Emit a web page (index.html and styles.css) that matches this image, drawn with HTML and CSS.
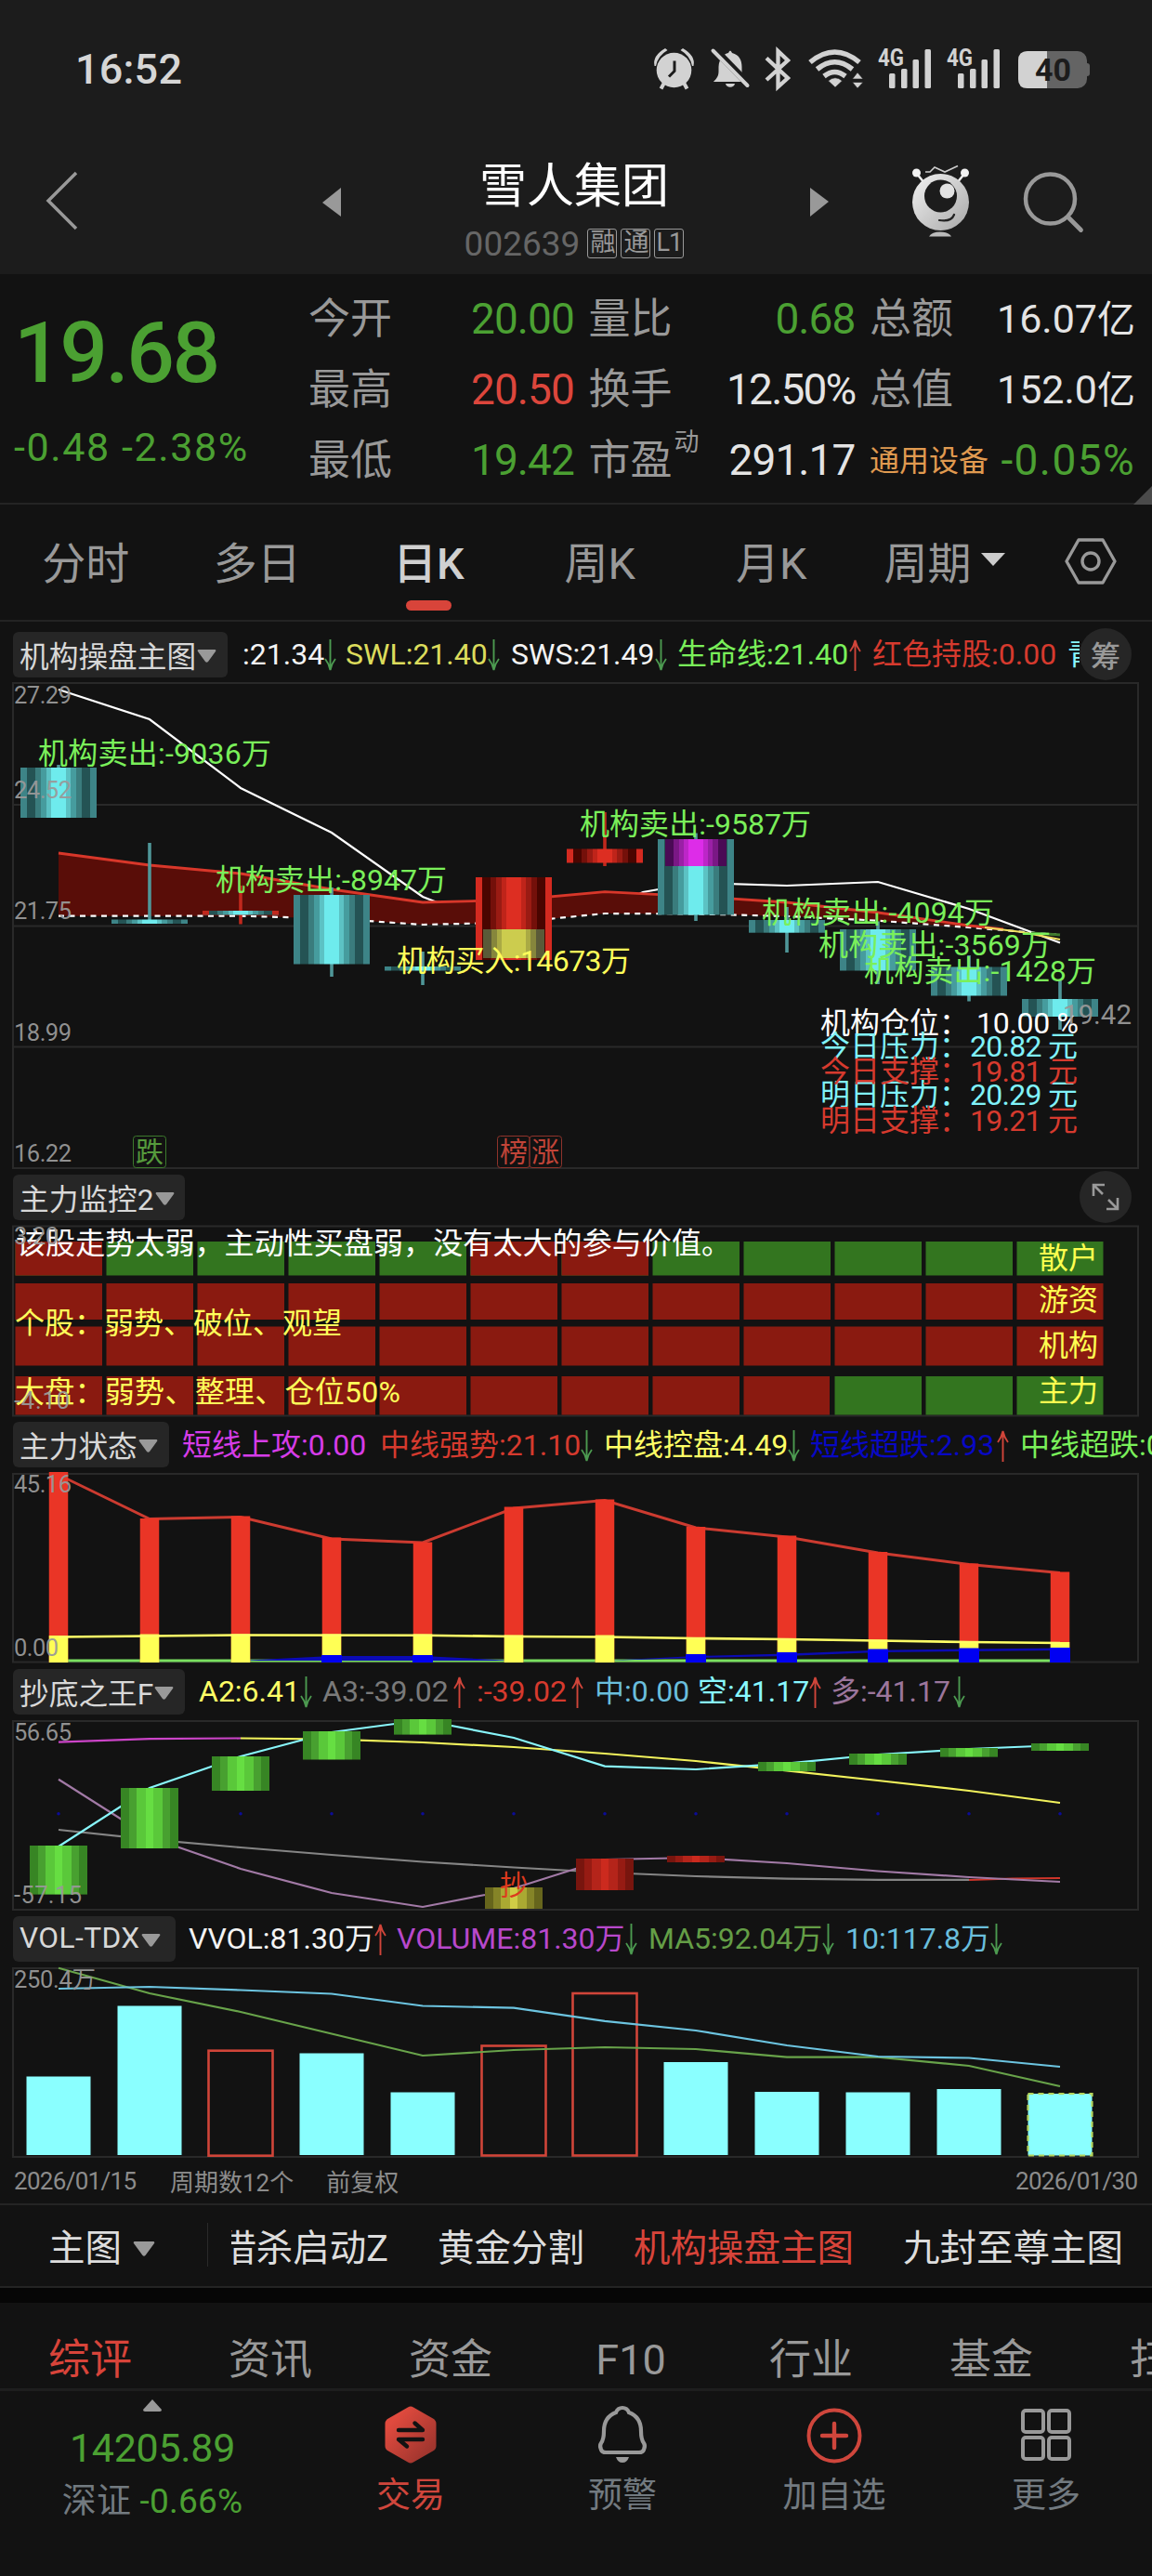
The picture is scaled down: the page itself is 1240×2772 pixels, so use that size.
FILE: index.html
```html
<!DOCTYPE html>
<html lang="zh-CN">
<head>
<meta charset="utf-8">
<title>雪人集团 002639</title>
<link rel="stylesheet" href="styles.css">
</head>
<body>
<svg class="defs" width="0" height="0" aria-hidden="true">
  <defs>
    <linearGradient id="cyan">
      <stop offset=".09" stop-color="#3d8487"/><stop offset=".09" stop-color="#245354"/><stop offset=".2" stop-color="#245354"/><stop offset=".2" stop-color="#3a7c7d"/><stop offset=".27" stop-color="#3a7c7d"/><stop offset=".27" stop-color="#469c9e"/><stop offset=".34" stop-color="#469c9e"/><stop offset=".34" stop-color="#5cc2c4"/><stop offset=".4" stop-color="#5cc2c4"/><stop offset=".4" stop-color="#6eebed"/><stop offset=".6" stop-color="#6eebed"/><stop offset=".6" stop-color="#5cc2c4"/><stop offset=".66" stop-color="#5cc2c4"/><stop offset=".66" stop-color="#469c9e"/><stop offset=".73" stop-color="#469c9e"/><stop offset=".73" stop-color="#3a7c7d"/><stop offset=".8" stop-color="#3a7c7d"/><stop offset=".8" stop-color="#245354"/><stop offset=".91" stop-color="#245354"/><stop offset=".91" stop-color="#3d8487"/>
    </linearGradient>
    <linearGradient id="red">
      <stop offset=".09" stop-color="#d42a20"/><stop offset=".09" stop-color="#4a0500"/><stop offset=".2" stop-color="#4a0500"/><stop offset=".2" stop-color="#74100a"/><stop offset=".27" stop-color="#74100a"/><stop offset=".27" stop-color="#9a1b13"/><stop offset=".34" stop-color="#9a1b13"/><stop offset=".34" stop-color="#bf241a"/><stop offset=".4" stop-color="#bf241a"/><stop offset=".4" stop-color="#dd2e22"/><stop offset=".6" stop-color="#dd2e22"/><stop offset=".6" stop-color="#bf241a"/><stop offset=".66" stop-color="#bf241a"/><stop offset=".66" stop-color="#9a1b13"/><stop offset=".73" stop-color="#9a1b13"/><stop offset=".73" stop-color="#74100a"/><stop offset=".8" stop-color="#74100a"/><stop offset=".8" stop-color="#4a0500"/><stop offset=".91" stop-color="#4a0500"/><stop offset=".91" stop-color="#d42a20"/>
    </linearGradient>
    <linearGradient id="gold">
      <stop offset=".13" stop-color="#5a5a38"/><stop offset=".13" stop-color="#86863c"/><stop offset=".22" stop-color="#86863c"/><stop offset=".22" stop-color="#aaaa44"/><stop offset=".31" stop-color="#aaaa44"/><stop offset=".31" stop-color="#cccc4e"/><stop offset=".69" stop-color="#cccc4e"/><stop offset=".69" stop-color="#aaaa44"/><stop offset=".78" stop-color="#aaaa44"/><stop offset=".78" stop-color="#86863c"/><stop offset=".87" stop-color="#86863c"/><stop offset=".87" stop-color="#5a5a38"/>
    </linearGradient>
    <linearGradient id="violet">
      <stop offset=".13" stop-color="#4a0a55"/><stop offset=".13" stop-color="#7a1885"/><stop offset=".22" stop-color="#7a1885"/><stop offset=".22" stop-color="#9a20a6"/><stop offset=".3" stop-color="#9a20a6"/><stop offset=".3" stop-color="#bd26c8"/><stop offset=".38" stop-color="#bd26c8"/><stop offset=".38" stop-color="#dd2ce8"/><stop offset=".62" stop-color="#dd2ce8"/><stop offset=".62" stop-color="#bd26c8"/><stop offset=".7" stop-color="#bd26c8"/><stop offset=".7" stop-color="#9a20a6"/><stop offset=".78" stop-color="#9a20a6"/><stop offset=".78" stop-color="#7a1885"/><stop offset=".87" stop-color="#7a1885"/><stop offset=".87" stop-color="#4a0a55"/>
    </linearGradient>
    <linearGradient id="lime">
      <stop offset=".14" stop-color="#378524"/><stop offset=".14" stop-color="#48a030"/><stop offset=".28" stop-color="#48a030"/><stop offset=".28" stop-color="#5ac83a"/><stop offset=".43" stop-color="#5ac83a"/><stop offset=".43" stop-color="#66de42"/><stop offset=".57" stop-color="#66de42"/><stop offset=".57" stop-color="#5ac83a"/><stop offset=".72" stop-color="#5ac83a"/><stop offset=".72" stop-color="#48a030"/><stop offset=".86" stop-color="#48a030"/><stop offset=".86" stop-color="#378524"/>
    </linearGradient>
    <linearGradient id="brick">
      <stop offset=".14" stop-color="#78150e"/><stop offset=".14" stop-color="#961b13"/><stop offset=".28" stop-color="#961b13"/><stop offset=".28" stop-color="#b4241a"/><stop offset=".43" stop-color="#b4241a"/><stop offset=".43" stop-color="#cc2a1e"/><stop offset=".57" stop-color="#cc2a1e"/><stop offset=".57" stop-color="#b4241a"/><stop offset=".72" stop-color="#b4241a"/><stop offset=".72" stop-color="#961b13"/><stop offset=".86" stop-color="#961b13"/><stop offset=".86" stop-color="#78150e"/>
    </linearGradient>
    <linearGradient id="olive">
      <stop offset=".14" stop-color="#66651c"/><stop offset=".14" stop-color="#858427"/><stop offset=".28" stop-color="#858427"/><stop offset=".28" stop-color="#aaa932"/><stop offset=".43" stop-color="#aaa932"/><stop offset=".43" stop-color="#cfcd46"/><stop offset=".57" stop-color="#cfcd46"/><stop offset=".57" stop-color="#aaa932"/><stop offset=".72" stop-color="#aaa932"/><stop offset=".72" stop-color="#858427"/><stop offset=".86" stop-color="#858427"/><stop offset=".86" stop-color="#66651c"/>
    </linearGradient>
    <linearGradient id="silver" x1="0" y1="0" x2="1" y2="1"><stop offset="0" stop-color="#f2f2f2"/><stop offset="1" stop-color="#a8a8a8"/></linearGradient>
    <linearGradient id="hexred" x1="0" y1="0" x2="1" y2="1"><stop offset=".2" stop-color="#e04a3e"/><stop offset="1" stop-color="#8f302a"/></linearGradient>
    <symbol id="down" viewBox="0 0 13 34"><path d="M6.500 0V32M1 21Q5 26 6.500 33Q8 26 12 21" fill="none" stroke="#4c9a50" stroke-width="1.900"/></symbol>
    <symbol id="up" viewBox="0 0 13 34"><path d="M6.500 34V2M1 13Q5 8 6.500 1Q8 8 12 13" fill="none" stroke="#d0453a" stroke-width="1.900"/></symbol>
    <symbol id="caret" viewBox="0 0 21 14"><path d="M1.500 0H19.500Q21 .8 20 2L12 13Q10.500 14.500 9 13L1 2Q0 .8 1.500 0Z" fill="#999"/></symbol>
    <symbol id="signal" viewBox="0 0 58 46">
      <g fill="#d2d2d2"><rect x="12" y="29" width="6.500" height="16" rx="1.500"/><rect x="25" y="24" width="6.500" height="21" rx="1.500"/><rect x="37.500" y="14" width="6.500" height="31" rx="1.500"/><rect x="50.500" y="3" width="6.500" height="42" rx="1.500"/></g>
      <text x="0" y="20.500" font-size="25" font-weight="700" fill="#d2d2d2" textLength="28" lengthAdjust="spacingAndGlyphs">4G</text>
    </symbol>
  </defs>
</svg>

<header class="top">
  <div class="status">
    <span class="clock">16:52</span>
    <svg class="status-icons" width="480" height="50" viewBox="700 50 480 50">
      <g fill="#d2d2d2">
        <circle cx="724.500" cy="75.500" r="18.800"/>
        <path d="M703.500 71Q701 60 715 52L717.500 54Q707 60 705 71ZM745.500 71Q748 60 734 52L731.500 54Q742 60 744 71Z"/>
        <path d="M714 89L710.500 95.500M735 89L738.500 95.500" stroke="#d2d2d2" stroke-width="4"/>
        <path d="M725 65.500V76.500L719 82.500" fill="none" stroke="#1c1c1c" stroke-width="3"/>
        <path d="M767 88C770 85 772.500 82 772.500 77V72C773 63 778 58 783 57Q785 52 787 57C795 59 797.500 65 797.500 72V78C797.500 83 800 85 803 87V88Z"/>
        <path d="M779 99H791V90H779Z" fill="#1c1c1c"/>
        <path d="M780 90H790Q789 93.800 785 93.800Q781 93.800 780 90Z"/>
        <path d="M769 54L807 93" stroke="#1c1c1c" stroke-width="8"/>
        <path d="M766.500 54.500L803.500 92" stroke="#d2d2d2" stroke-width="4" stroke-linecap="round"/>
        <path d="M824 62.500L847 84L836.500 93.500V55L847 65L824 86" fill="none" stroke="#d2d2d2" stroke-width="4.300"/>
        <path d="M871 76Q897.500 54 924 76M878.500 83.500Q897.500 68 916.500 83.500M886 91Q897.500 82 909 91" transform="translate(0 -9)" fill="none" stroke="#d2d2d2" stroke-width="5.500"/>
        <path d="M898 94L890.500 87Q898 80.500 905.500 87ZM916.500 85L922 78L928 85ZM916.500 88.500L922 95L928 88.500Z" stroke="#1c1c1c" stroke-width=".6"/>
        <rect x="1095" y="55" width="74" height="40" rx="10" fill="#646464"/>
        <path d="M1169 68Q1172 68 1172 71V79Q1172 82 1169 82Z" fill="#646464"/>
        <path d="M1126 55V95H1105Q1095 95 1095 85V65Q1095 55 1105 55Z"/>
      </g>
      <use href="#signal" x="944" y="50" width="58" height="46"/>
      <use href="#signal" x="1018" y="50" width="58" height="46"/>
      <text x="1113" y="87" font-size="34" font-weight="700" fill="#1c1c1c" textLength="39">40</text>
    </svg>
  </div>
  <div class="titlebar">
    <svg class="back" width="36" height="66" viewBox="48 183 36 66"><path d="M82 186L52 216L82 246" fill="none" stroke="#999" stroke-width="3.500"/></svg>
    <svg width="22" height="34" viewBox="0 0 22 34"><path d="M21 1V32L1 17Z" fill="#999"/></svg>
    <div class="stock">
      <h1>雪人集团</h1>
      <div class="code"><span class="num">002639</span><i>融</i><i>通</i><i>L1</i></div>
    </div>
    <svg width="22" height="34" viewBox="0 0 22 34"><path d="M1 1V32L21 16Z" fill="#999"/></svg>
    <svg class="mascot" width="64" height="78" viewBox="982 178 64 78">
      <path d="M988 187L996 197M1039 187L1031 197" stroke="#eee" stroke-width="2.500"/>
      <circle cx="987.500" cy="186" r="4.500" fill="#f2f2f2"/><circle cx="1039.500" cy="186" r="4.500" fill="#f2f2f2"/>
      <path d="M997 185H1002L1007 180L1018 185L1032 178.500" fill="none" stroke="#ccc" stroke-width="1.600"/>
      <circle cx="1013.500" cy="217.500" r="30.500" fill="url(#silver)"/>
      <circle cx="1013.500" cy="211" r="17.500" fill="#1c1c1c"/><circle cx="1020.500" cy="205.500" r="8" fill="#e2e2e2"/>
      <path d="M1012 237Q1025 239 1028 231" fill="none" stroke="#222" stroke-width="2.200" stroke-linecap="round"/>
      <path d="M1001 254.500Q1004 249.500 1013 249.500Q1022 249.500 1025 254.500Z" fill="#bbb"/>
    </svg>
    <svg width="68" height="68" viewBox="1100 182 68 68"><circle cx="1131.500" cy="213" r="26.500" fill="none" stroke="#999" stroke-width="4.500"/><path d="M1151 233L1164.500 246.500" stroke="#999" stroke-width="4.800" stroke-linecap="round"/></svg>
  </div>
</header>

<section class="quote">
  <div class="last">
    <div class="price">19.68</div>
    <div class="change">-0.48 -2.38%</div>
  </div>
  <dl class="stats">
    <div><dt>今开</dt><dd class="g">20.00</dd></div>
    <div><dt>量比</dt><dd class="g">0.68</dd></div>
    <div><dt>总额</dt><dd class="amt">16.07<b>亿</b></dd></div>
    <div><dt>最高</dt><dd class="r">20.50</dd></div>
    <div><dt>换手</dt><dd class="tight">12.50%</dd></div>
    <div><dt>总值</dt><dd class="amt">152.0<b>亿</b></dd></div>
    <div><dt>最低</dt><dd class="g">19.42</dd></div>
    <div><dt>市盈<sup>动</sup></dt><dd>291.17</dd></div>
    <div><dt class="sector">通用设备</dt><dd class="g wide">-0.05%</dd></div>
  </dl>
  <span class="corner"></span>
</section>

<nav class="periods">
  <a>分时</a><a>多日</a><a class="on">日K</a><a>周K</a><a>月K</a><a class="more">周期<svg width="26" height="14" viewBox="0 0 26 14"><path d="M0 0H26L13 14Z" fill="#ccc"/></svg></a>
  <svg class="gear" width="56" height="52" viewBox="0 0 56 52"><path d="M15 3H41L54 26L41 49H15L2 26Z" fill="none" stroke="#999" stroke-width="3.400" stroke-linejoin="round"/><circle cx="28" cy="26" r="9" fill="none" stroke="#999" stroke-width="3.400"/></svg>
</nav>

<section class="panel main">
  <div class="head">
    <button class="chip">机构操盘主图<svg><use href="#caret"/></svg></button>
    <div class="reads">
      <span class="white">:21.34<svg><use href="#down"/></svg></span>
      <span class="dim-yellow">SWL:21.40<svg><use href="#down"/></svg></span>
      <span class="white">SWS:21.49<svg><use href="#down"/></svg></span>
      <span class="lime">生命线:21.40<svg><use href="#up"/></svg></span>
      <span class="red">红色持股:0.00</span>
      <span class="aqua">青色</span>
    </div>
    <button class="round">筹</button>
  </div>
  <svg class="plot" width="1240" height="524" viewBox="0 734 1240 524">
    <g class="frame"><rect x="14" y="735" width="1211" height="522"/><path d="M14 866H1225M14 996.500H1225M14 1126.500H1225"/></g>
    <polyline class="ln" stroke="#fff" points="63,742 161,774 259,848 357,896 455,965 553,1003 594,987.500 607,984 651,980 692,960 749,950 847,953 945,949 1043,978 1141,1014.500"/>
    <path fill="#590d08" d="M63 918L161 931L259 940L357 957L455 971L553 968.500L651 959.700L749 964.600L847 971L945 982L1043 996L1043 998L945 990.700L847 986L749 983.400L651 983L553 992.600L455 995L357 988.400L259 985.700L63 985.700Z"/>
    <polyline class="ln" stroke="#fff" stroke-dasharray="6 5.500" points="63,985.700 259,985.700 357,988.400 455,995 553,992.600 651,983 749,983.400 847,986 945,990.700 1043,998 1141,1006"/>
    <polyline fill="none" stroke="#d8372a" stroke-width="2.800" points="63,918 161,931 259,940 357,957 455,971 553,968.500 651,959.700 749,964.600 847,971 945,982 1043,996 1080,1000"/>
    <path d="M1110 1004L1141 1006" stroke="#3f7a2c" stroke-width="3"/>
    <path class="ln" d="M1060 998L1100 1003L1141 1011" stroke="#f0e060"/>
    <g stroke="#4f9698" stroke-width="3.600"><path d="M63 823V830M161 907V990M357 955V1051M455 1024V1060M749 896.500V991M847 976V1025M945 991.500V1059M1043 1028V1077.500M1141 1054.600V1108"/></g>
    <path d="M259 953V994.500M651 874V932" stroke="#c0281d" stroke-width="3.600"/>
    <g fill="url(#cyan)">
      <rect x="22" y="826" width="82" height="54"/><rect x="120" y="989.500" width="82" height="4.500"/><rect x="218" y="980" width="82" height="4.500"/><rect x="316" y="963" width="82" height="74.500"/><rect x="414" y="1040" width="82" height="4.500"/>
      <rect x="708" y="903" width="82" height="81.500"/><rect x="806" y="990" width="82" height="13.700"/><rect x="904" y="1000" width="82" height="44.500"/><rect x="1002" y="1040.500" width="82" height="31"/><rect x="1100" y="1075" width="82" height="19"/>
    </g>
    <path d="M218 980h7v4.500h-7zM293 980h7v4.500h-7z" fill="#c0281d"/>
    <g fill="url(#red)"><rect x="512" y="944" width="82" height="89"/><rect x="610" y="913.500" width="82" height="15"/></g>
    <rect x="520" y="1000" width="66" height="31" fill="url(#gold)"/>
    <rect x="716" y="903" width="66" height="29" fill="url(#violet)"/>
    <g class="note lime">
      <text x="41" y="821.500" textLength="251">机构卖出:-9036万</text>
      <text x="232" y="958" textLength="249">机构卖出:-8947万</text>
      <text x="624" y="898" textLength="249">机构卖出:-9587万</text>
      <text x="820" y="993" textLength="250">机构卖出:-4094万</text>
      <text x="881" y="1028" textLength="250">机构卖出:-3569万</text>
      <text x="930" y="1055.500" textLength="250">机构卖出:-1428万</text>
    </g>
    <text class="note yellow" x="427" y="1045" textLength="252">机构买入:14673万</text>
    <g class="note white"><text x="883" y="1111.500">机构仓位：</text><text x="1051" y="1111.500" textLength="110">10.00 %</text></g>
    <g class="note aqua"><text x="883" y="1136.500">今日压力：</text><text x="1044" y="1136.500" textLength="116">20.82 元</text><text x="883" y="1189">明日压力：</text><text x="1044" y="1189" textLength="116">20.29 元</text></g>
    <g class="note red"><text x="883" y="1164">今日支撑：</text><text x="1044" y="1164" textLength="116">19.81 元</text><text x="883" y="1217">明日支撑：</text><text x="1044" y="1217" textLength="116">19.21 元</text></g>
    <g class="axis"><text x="15" y="757" textLength="62">27.29</text><text x="15" y="859" textLength="62">24.52</text><text x="15" y="989" textLength="62">21.75</text><text x="15" y="1120" textLength="62">18.99</text><text x="15" y="1250" textLength="62">16.22</text><text class="big" x="1144" y="1102" textLength="74">19.42</text></g>
    <g class="tag"><rect x="143.500" y="1222.500" width="35" height="34" rx="3" stroke="#3c7a2c"/><text x="146" y="1250" fill="#559a3c">跌</text></g>
    <g class="tag" fill="#c04438"><rect x="535.500" y="1222.500" width="34.500" height="34" rx="3" stroke="#8f332b"/><rect x="570" y="1222.500" width="34.500" height="34" rx="3" stroke="#8f332b"/><text x="538" y="1250">榜</text><text x="572" y="1250">涨</text></g>
  </svg>
</section>

<section class="panel monitor">
  <div class="head">
    <button class="chip">主力监控2<svg><use href="#caret"/></svg></button>
    <button class="round"><svg class="expand" width="32" height="32" viewBox="0 0 32 32"><path d="M3 15V3H15M4 4L13 13M29 17V29H17M28 28L19 19" fill="none" stroke="#999" stroke-width="2.600"/></svg></button>
  </div>
  <svg class="plot" width="1240" height="207" viewBox="0 1318 1240 207">
    <g class="frame"><rect x="14" y="1319.500" width="1211" height="204"/></g>
    <g fill="none" stroke-dasharray="93.500 4.500">
      <path d="M16.500 1354.300H1187.500" stroke="#33751f" stroke-width="36.500"/>
      <path d="M16.500 1354.300H110M506.500 1354.300H698" stroke="#8a1a10" stroke-width="36.500"/>
      <path d="M16.500 1400.500H1187.500" stroke="#8a1a10" stroke-width="39"/>
      <path d="M16.500 1448.500H1187.500" stroke="#8a1a10" stroke-width="42"/>
      <path d="M16.500 1501.800H893" stroke="#8a1a10" stroke-width="41.500"/>
      <path d="M898.500 1501.800H1187.500" stroke="#33751f" stroke-width="41.500"/>
    </g>
    <text class="note white" x="17" y="1348.500" textLength="770">该股走势太弱，主动性买盘弱，没有太大的参与价值。</text>
    <g class="note yellow">
      <text x="16" y="1434.500" textLength="352">个股：弱势、破位、观望</text>
      <text x="16" y="1509" textLength="415">大盘：弱势、整理、仓位50%</text>
      <g fill="#ffff50"><text x="1118" y="1364.500">散户</text><text x="1118" y="1409.500">游资</text><text x="1118" y="1458.500">机构</text><text x="1118" y="1508">主力</text></g>
    </g>
    <g class="axis"><text x="15" y="1339" textLength="48">3.20</text><text x="15" y="1516" textLength="60">-4.10</text></g>
  </svg>
</section>

<section class="panel state">
  <div class="head">
    <button class="chip">主力状态<svg><use href="#caret"/></svg></button>
    <div class="reads">
      <span class="magenta">短线上攻:0.00</span>
      <span class="red">中线强势:21.10<svg><use href="#down"/></svg></span>
      <span class="yellow">中线控盘:4.49<svg><use href="#down"/></svg></span>
      <span class="blue">短线超跌:2.93<svg><use href="#up"/></svg></span>
      <span class="lime">中线超跌:0.00</span>
    </div>
  </div>
  <svg class="plot" width="1240" height="205" viewBox="0 1585 1240 205">
    <g class="frame"><rect x="14" y="1586" width="1211" height="202.500"/></g>
    <path d="M63 1787H1141" stroke="#7ae060" stroke-width="3"/>
    <path d="M259 1787L357 1782H455L553 1787ZM651 1787L749 1782L847 1779.500L945 1775.700L1043 1774.500L1141 1773.500V1776L945 1778L847 1782L749 1784Z" fill="#0b0bb4"/>
    <polyline fill="none" stroke="#cc3b30" stroke-width="3" points="63,1587 161,1634.500 259,1632.500 357,1656 455,1660 553,1623 651,1614.500 749,1644 847,1654 945,1671 1043,1683.500 1141,1692.500"/>
    <g stroke="#ea3526" stroke-width="20.500"><path d="M63 1584V1789M161 1634V1789M259 1631.500V1789M357 1654.500V1789M455 1659.500V1789M553 1621.500V1789M651 1613.500V1789M749 1643V1789M847 1652.500V1789M945 1670V1789M1043 1682.500V1789M1141 1691.500V1789"/></g>
    <g stroke="#ffff55" stroke-width="20.500"><path d="M63 1760V1789M161 1758.500V1789M259 1758.500V1789M357 1758.500V1789M455 1758.500V1789M553 1759.500V1789M651 1759.500V1789M749 1762V1789M847 1763V1789M945 1764.500V1789M1043 1766V1789M1141 1767V1789"/></g>
    <polyline fill="none" stroke="#ffff66" stroke-width="2.600" points="63,1761.500 161,1760.500 259,1759.500 455,1759.700 553,1761 651,1761.500 749,1763 847,1764 945,1765.500 1043,1767 1141,1768"/>
    <g stroke="#0000f2" stroke-width="22"><path d="M357 1781V1789M455 1781V1789M749 1780V1789M847 1778V1789M945 1774.500V1789M1043 1773.500V1789M1141 1773V1789"/></g>
    <g class="axis"><text x="15" y="1606" textLength="62">45.16</text><text x="15" y="1782" textLength="48">0.00</text></g>
  </svg>
</section>

<section class="panel king">
  <div class="head">
    <button class="chip">抄底之王F<svg><use href="#caret"/></svg></button>
    <div class="reads">
      <span class="yellow">A2:6.41<svg><use href="#down"/></svg></span>
      <span class="gray">A3:-39.02<svg><use href="#up"/></svg></span>
      <span class="red">:-39.02<svg><use href="#up"/></svg></span>
      <span class="sky">中:0.00</span>
      <span class="aqua">空:41.17<svg><use href="#up"/></svg></span>
      <span class="mauve">多:-41.17<svg><use href="#down"/></svg></span>
    </div>
  </div>
  <svg class="plot" width="1240" height="205" viewBox="0 1851 1240 205">
    <g class="frame"><rect x="14" y="1852" width="1211" height="203"/></g>
    <path d="M63 1951.700H1141.500" stroke="#0c0c96" stroke-width="3.600" stroke-linecap="round" stroke-dasharray="0 98"/>
    <polyline class="ln" stroke="#858585" points="63,1969 161,1979.400 259,1988 357,1996 455,2003.500 553,2009.500 651,2015 749,2019 847,2021.600 945,2022.800 1043,2022.800"/>
    <polyline class="ln" stroke="#d0352a" points="1043,2023 1090,2021.500 1141,2021"/>
    <polyline class="ln" stroke="#a27aa6" points="63,1914.700 161,1977 259,2011 357,2037 455,2052 522,2039 553,2032 651,2001 749,1999 847,2005 945,2013.500 1043,2020 1141,2025"/>
    <polyline class="ln" stroke="#f2f25c" points="259,1870.500 357,1871.700 455,1875 553,1880 651,1887 749,1895 847,1905.400 945,1916 1043,1927 1141,1940"/>
    <polyline class="ln" stroke="#cc44c8" points="63,1874.700 161,1871.200 259,1870.500"/>
    <polyline class="ln" stroke="#88f6fb" points="63,1987 161,1924 259,1890 357,1864 455,1851 553,1870 651,1900.600 749,1904 847,1897.600 945,1888 1043,1882 1141,1878"/>
    <g fill="url(#lime)"><rect x="32" y="1986" width="62" height="52.600"/><rect x="130" y="1924" width="62" height="65"/><rect x="228" y="1890" width="62" height="37"/><rect x="326" y="1863" width="62" height="30.500"/><rect x="424" y="1850" width="62" height="16.600"/><rect x="816" y="1896" width="62" height="10"/><rect x="914" y="1887" width="62" height="12"/><rect x="1012" y="1881" width="62" height="9.600"/><rect x="1110" y="1876" width="62" height="8"/></g>
    <rect x="522" y="2031" width="62" height="23" fill="url(#olive)"/>
    <g fill="url(#brick)"><rect x="620" y="2000" width="62" height="34"/><rect x="718" y="1997" width="62" height="7"/></g>
    <text class="small" x="538" y="2039" fill="#dc3a1e">抄</text>
    <g class="axis"><text x="15" y="1873" textLength="62">56.65</text><text x="15" y="2047.500" textLength="73">-57.15</text></g>
  </svg>
</section>

<section class="panel volume">
  <div class="head">
    <button class="chip">VOL-TDX<svg><use href="#caret"/></svg></button>
    <div class="reads">
      <span class="white">VVOL:81.30万<svg><use href="#up"/></svg></span>
      <span class="purple">VOLUME:81.30万<svg><use href="#down"/></svg></span>
      <span class="moss">MA5:92.04万<svg><use href="#down"/></svg></span>
      <span class="sky">10:117.8万<svg><use href="#down"/></svg></span>
    </div>
  </div>
  <svg class="plot" width="1240" height="205" viewBox="0 2117 1240 205">
    <g class="frame"><rect x="14" y="2118" width="1211" height="203"/></g>
    <g fill="#8affff"><rect x="28.500" y="2234.500" width="69" height="84.500"/><rect x="126.500" y="2158.500" width="69" height="160.500"/><rect x="322.500" y="2209.500" width="69" height="109.500"/><rect x="420.500" y="2251.500" width="69" height="67.500"/><rect x="714.500" y="2219" width="69" height="100"/><rect x="812.500" y="2251" width="69" height="68"/><rect x="910.500" y="2251.500" width="69" height="67.500"/><rect x="1008.500" y="2248" width="69" height="71"/></g>
    <rect x="1106.500" y="2253" width="69" height="66.500" fill="#8affff" stroke="#b4d45a" stroke-width="2.200" stroke-dasharray="6 5"/>
    <g fill="none" stroke="#d04539" stroke-width="2.600"><rect x="224.500" y="2206.700" width="69" height="113"/><rect x="518.500" y="2201.500" width="69" height="118"/><rect x="616.500" y="2145" width="69" height="174.500"/></g>
    <polyline class="ln" stroke="#68a34a" points="63,2117.800 161,2145 259,2165 357,2188.500 455,2212 553,2206 651,2203 749,2205 847,2213.600 945,2213.600 1043,2223 1141,2245"/>
    <polyline class="ln" stroke="#6cc4e0" points="63,2140 161,2138 259,2141.500 357,2145.500 455,2158.500 553,2160.700 651,2174.800 749,2185 847,2201 945,2213 1043,2214.500 1141,2224"/>
    <g class="axis"><text x="15" y="2139" textLength="88">250.4万</text></g>
  </svg>
  <div class="dates"><span class="d">2026/01/15</span><span class="n">周期数12个</span><span>前复权</span><span class="d end">2026/01/30</span></div>
</section>

<nav class="strip">
  <a class="pick">主图<svg width="24" height="16" viewBox="0 0 21 14"><use href="#caret" width="21" height="14"/></svg></a>
  <div class="scroll"><a class="cut"><span>借杀启动Z</span></a><a>黄金分割</a><a class="on">机构操盘主图</a><a>九封至尊主图</a></div>
</nav>
<div class="band"></div>
<nav class="tabs"><a class="on">综评</a><a>资讯</a><a>资金</a><a>F10</a><a>行业</a><a>基金</a><a>扫雷</a></nav>

<footer class="dock">
  <div class="index">
    <svg width="22" height="14" viewBox="0 0 22 14"><path d="M11 0L21 11Q21 13 19 13H3Q1 13 1 11Z" fill="#999"/></svg>
    <div class="pts">14205.89</div>
    <div class="pct">深证 <em>-0.66%</em></div>
  </div>
  <a class="trade">
    <svg width="64" height="64" viewBox="0 0 64 64"><path d="M29 2.500Q32 .5 35 2.500L56 14.500Q59.500 16.500 59.500 20V44Q59.500 47.500 56 49.500L35 61.500Q32 63.500 29 61.500L8 49.500Q4.500 47.500 4.500 44V20Q4.500 16.500 8 14.500Z" fill="url(#hexred)"/><path d="M19 27H45L36.500 19.500M45 37H19L28 44.500" fill="none" stroke="#121212" stroke-width="4.400" stroke-linecap="round" stroke-linejoin="round"/></svg>
    交易</a>
  <a>
    <svg width="64" height="64" viewBox="0 0 64 64"><path d="M32 3Q37 3 39 8Q52 13 52 28Q52 37 55 41Q57 44 55 48Q54 51 50 51H14Q10 51 9 48Q7 44 9 41Q12 37 12 28Q12 13 25 8Q27 3 32 3Z" fill="none" stroke="#999" stroke-width="4.200"/><path d="M25 56H39Q37 62 32 62Q27 62 25 56Z" fill="#999"/></svg>
    预警</a>
  <a>
    <svg width="64" height="64" viewBox="0 0 64 64"><circle cx="32" cy="33" r="27.500" fill="none" stroke="#cf463c" stroke-width="4"/><path d="M32 20V46M19 33H45" stroke="#cf463c" stroke-width="4.400" stroke-linecap="round"/></svg>
    加自选</a>
  <a>
    <svg width="64" height="64" viewBox="0 0 64 64"><g fill="none" stroke="#999" stroke-width="4"><rect x="7" y="6" width="22" height="23" rx="3"/><rect x="35" y="6" width="22" height="23" rx="3"/><rect x="7" y="35" width="22" height="23" rx="3"/><rect x="35" y="35" width="22" height="23" rx="3"/></g></svg>
    更多</a>
</footer>
</body>
</html>
```
FILE: styles.css
```css
* { box-sizing: border-box; }
html { overflow: hidden; }
body { margin: 0; width: 1240px; height: 2772px; overflow: hidden; background: #121212; color: #ddd; font-family: Roboto, "Noto Sans CJK SC", sans-serif; }
h1, dl, dt, dd { margin: 0; font-weight: 400; }
svg { display: block; flex: none; overflow: visible; }
.defs { position: absolute; }
button { border: 0; font: inherit; }

.top { height: 295px; background: #1c1c1c; overflow: hidden; }
.status { display: flex; justify-content: space-between; height: 150px; padding: 50px 60px 0 81px; }
.status-icons { margin-right: -1px; }
.clock { font-size: 45px; line-height: 50px; font-weight: 500; color: #d6d6d6; letter-spacing: .2px; }
.titlebar { display: flex; align-items: flex-start; height: 145px; padding: 33px 0 0 48px; }
.titlebar > svg:nth-child(2) { margin: 18px 0 0 262px; }
.titlebar > svg:nth-of-type(3) { margin: 18px 88px 0 0; }
.mascot { margin: -5px 54px 0 0; }
.stock { width: 503px; margin-top: -12px; padding-right: 3px; text-align: center; }
.stock h1 { font-size: 51px; line-height: 60px; color: #fff; }
.code { display: flex; justify-content: center; align-items: center; gap: 4px; height: 34px; margin-top: 14px; color: #666; font-size: 37px; }
.num { margin-right: 4px; }
.code i { width: 32px; height: 32px; border: 1.500px solid #999; border-radius: 3px; font-style: normal; font-size: 27px; line-height: 29px; color: #999; letter-spacing: -1px; }

.quote { position: relative; display: flex; height: 248px; border-bottom: 2px solid #242424; }
.last { width: 332px; padding: 28px 0 0 15px; color: #4ba032; }
.price { font-size: 91px; line-height: 115px; font-weight: 500; letter-spacing: -2.500px; }
.change { font-size: 43px; line-height: 50px; margin-top: 18px; letter-spacing: 1.600px; white-space: nowrap; }
.stats { display: grid; grid-template-columns: 285px 286px 285px; grid-auto-rows: 76px; column-gap: 16.500px; padding-top: 10px; font-size: 46px; line-height: 60px; }
.stats div { display: flex; justify-content: space-between; align-items: center; height: 76px; white-space: nowrap; }
.stats dt { height: 60px; padding-top: 1px; font-size: 45px; color: #999; }
.stats dd { height: 60px; letter-spacing: -.9px; margin-right: -1px; color: #e4e4e4; }
.stats .amt { font-size: 43px; letter-spacing: 0; }
.stats .tight { letter-spacing: -1.800px; }
.stats .wide { letter-spacing: 1.400px; }
.amt b { font-size: 41px; font-weight: 400; }
.stats .g { color: #4ba032; }
.stats .r { color: #dc463c; }
.stats .sector { font-size: 32px; color: #e09a50; }
.stats sup { font-size: 27px; line-height: 0; vertical-align: 26px; margin-left: 2px; }
.corner { position: absolute; right: 0; bottom: -2px; border-style: solid; border-width: 0 0 20px 20px; border-color: transparent transparent #4a4a4a; }

.periods { display: flex; align-items: center; height: 126px; border-bottom: 2px solid #242424; padding-bottom: 6px; font-size: 47px; color: #999; }
.periods a { position: relative; width: 184.500px; text-align: center; }
.periods .on { color: #d0d0d0; font-weight: 500; }
.periods .on::after { content: ""; position: absolute; left: 68px; top: 78px; width: 49px; height: 11px; border-radius: 6px; background: #d8443a; }
.periods .more { display: flex; align-items: center; width: 223px; padding-left: 29px; gap: 10px; }
.gear { margin-top: 4px; }

.panel .head { display: flex; align-items: flex-start; height: 61px; padding: 6px 0 0 14px; overflow: hidden; }
.panel.main .head { height: 65px; padding-top: 11px; }
.panel.monitor .head { height: 60px; }
.panel.state .head { height: 60px; padding-top: 5px; }
.chip { flex: none; display: flex; align-items: center; width: 185px; height: 49px; padding: 0 0 2px 7px; border-radius: 6px; background: #262626; color: #d8d8d8; font-size: 31.700px; gap: 1px; white-space: nowrap; }
.chip svg { width: 21px; height: 14px; margin-top: 4px; }
.main .chip { width: 231px; }
.state .chip { width: 168px; }
.volume .chip { width: 175px; letter-spacing: .4px; }
.reads { display: grid; height: 49px; font-size: 32px; line-height: 49px; white-space: nowrap; overflow: hidden; }
.reads span { display: flex; justify-content: space-between; align-items: center; padding-right: 12px; }
.reads svg { width: 13px; height: 34px; }
.main .reads { width: 901px; margin-left: 16px; grid-template-columns: 111px 178px 179px 210px 210px 40px; }
.state .reads { width: 1044px; margin-left: 14px; padding-top: 1px; grid-template-columns: 213px 241px 222px 226px 300px; }
.king .reads { margin-left: 15px; grid-template-columns: 133px 166px 127px 111px 143px 157px; }
.volume .reads { margin-left: 14px; grid-template-columns: 224px 271px 212px 176px; }
.round { flex: none; display: flex; align-items: center; justify-content: center; width: 56px; height: 56px; margin: -4px 22px 0 auto; padding: 0; border-radius: 50%; background: #262626; color: #999; font-size: 32px; font-weight: 500; }
.main .round { margin-left: 0; padding-bottom: 1px; }
.white { color: #f4f4f4; fill: #fff; }
.dim-yellow { color: #dcdc5c; }
.yellow { color: #ffff66; fill: #ffff5a; }
.lime { color: #7af05a; fill: #7af05a; }
.red { color: #d63a2e; fill: #d63a2e; }
.aqua { color: #88f8ff; fill: #80f2fa; }
.magenta { color: #d63ce8; }
.blue { color: #0808c4; }
.gray { color: #7a7a7a; }
.sky { color: #6abedc; }
.mauve { color: #9c769c; }
.purple { color: #b848cc; }
.moss { color: #649e46; }

.frame { fill: none; stroke: #292929; stroke-width: 2; }
.ln { fill: none; stroke-width: 2.200; }
.note { font-size: 32px; }
.small { font-size: 30px; }
.axis { font-size: 25.500px; fill: #999; fill-opacity: .95; }
.axis .big { font-size: 29.500px; }
.tag { font-size: 30px; }
.tag rect { fill: none; }
.dates { display: flex; align-items: center; height: 49px; padding: 0 15px; font-size: 26px; color: #8c8c8c; }
.dates .d { width: 132px; letter-spacing: -.7px; white-space: nowrap; }
.dates .n { margin: 0 35px 0 36px; }
.dates .end { margin-left: auto; }

.strip { display: flex; align-items: center; height: 91px; border-top: 2px solid #242424; border-bottom: 2px solid #242424; padding-bottom: 2px; font-size: 39.500px; color: #ddd; white-space: nowrap; }
.pick { display: flex; align-items: center; width: 224px; height: 47px; padding-left: 52px; gap: 12px; border-right: 1px solid #2a2a2a; }
.pick svg { margin-top: 9px; }
.scroll { display: flex; width: 990px; padding-left: 25px; gap: 53px; }
.cut { display: flex; justify-content: flex-end; width: 169px; overflow: hidden; }
.on { color: #d8443a; }
.band { height: 16px; background: #060606; }
.tabs { display: flex; height: 92px; width: 1240px; overflow: hidden; font-size: 45px; line-height: 124px; color: #999; }
.tabs a { flex: none; width: 194px; text-align: center; }
.tabs .on { color: #d8443a; }
.dock { display: flex; height: 202px; border-top: 3px solid #1e1e1e; font-size: 37px; color: #727a80; }
.index { display: flex; flex-direction: column; align-items: center; width: 328px; padding-top: 9px; }
.pts { margin-top: 13px; font-size: 43px; line-height: 50px; color: #4ba032; letter-spacing: -.3px; }
.pct { margin-top: 6px; line-height: 54px; letter-spacing: .2px; }
.pct em { font-style: normal; color: #4ba032; }
.dock a { display: flex; flex-direction: column; align-items: center; width: 228px; padding-top: 15px; line-height: 54px; gap: 7px; }
.dock .trade { color: #cf463c; }
```
